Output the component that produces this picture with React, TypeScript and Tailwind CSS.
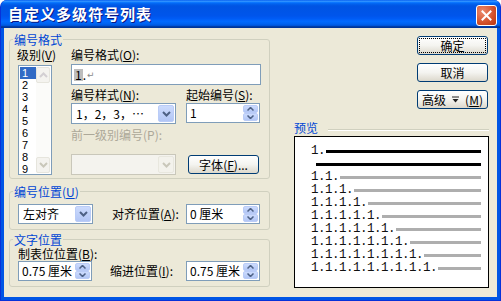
import React from 'react';

const levels = [2, 3, 4, 5, 6, 7, 8, 9];

function Key({ k }: { k: string }) {
  return (
    <span>
      (<span className="underline underline-offset-1">{k}</span>)
    </span>
  );
}

function Chevron({ color, up }: { color: string; up?: boolean }) {
  return (
    <svg width="9" height="6" viewBox="0 0 9 6">
      <path d={up ? 'M1 5l3.5-3.5L8 5' : 'M1 1l3.5 3.5L8 1'} fill="none" stroke={color} strokeWidth="2" />
    </svg>
  );
}

function DropBtn({ disabled }: { disabled?: boolean }) {
  return (
    <div
      className={`flex h-full w-[16px] items-center justify-center rounded-[2px] border ${
        disabled ? 'border-[#E8E7DE] bg-[#F3F2EC]' : 'border-[#BACCF7] bg-gradient-to-b from-[#CCDBFD] to-[#B2C6F5]'
      }`}
    >
      <Chevron color={disabled ? '#C9C7BA' : '#4D6185'} />
    </div>
  );
}

function Combo({ text, className, disabled }: { text?: string; className: string; disabled?: boolean }) {
  return (
    <div
      className={`flex items-stretch border p-[1px] ${
        disabled ? 'border-[#C9C7BA] bg-[#F4F3EE]' : 'border-[#7F9DB9] bg-white'
      } ${className}`}
    >
      <span className="flex flex-1 items-center pl-[3px]">{text}</span>
      <DropBtn disabled={disabled} />
    </div>
  );
}

function SpinBtn({ up }: { up?: boolean }) {
  return (
    <div className="flex h-[8px] w-[15px] items-center justify-center rounded-[2px] border border-[#BACCF7] bg-gradient-to-b from-[#CCDBFD] to-[#B2C6F5]">
      <svg width="7" height="4" viewBox="0 0 7 4">
        <path d={up ? 'M0.5 3.5l3-3 3 3' : 'M0.5 0.5l3 3 3-3'} fill="none" stroke="#4D6185" strokeWidth="1.5" />
      </svg>
    </div>
  );
}

function Spin({ text, className }: { text: string; className: string }) {
  return (
    <div className={`flex h-[20px] border border-[#7F9DB9] bg-white p-[1px] ${className}`}>
      <span className="flex flex-1 items-center pl-[2px] whitespace-nowrap">{text}</span>
      <div className="flex flex-col">
        <SpinBtn up />
        <SpinBtn />
      </div>
    </div>
  );
}

function XpButton({ children, focus, className }: { children: React.ReactNode; focus?: boolean; className?: string }) {
  return (
    <div
      className={`flex h-[19px] w-[71px] rounded-[3px] border border-[#003C74] bg-gradient-to-b from-[#FFFFFF] via-[#F4F4F0] to-[#DCD8CC] p-[1px] ${className ?? ''}`}
    >
      <div
        className={`flex flex-1 items-center justify-center rounded-[1px] border ${
          focus ? 'border-dotted border-[#000000]' : 'border-transparent'
        }`}
      >
        {children}
      </div>
    </div>
  );
}

function Group({ title, children, className }: { title: React.ReactNode; children: React.ReactNode; className?: string }) {
  return (
    <fieldset className={`w-[261px] rounded-[3px] border border-[#D0D0BF] ${className ?? ''}`}>
      <legend className="ml-[3px] px-[1px] text-[12px] leading-[13px] text-[#0046D5]">{title}</legend>
      {children}
    </fieldset>
  );
}

export default function App() {
  return (
    <div className="h-[301px] w-[501px] bg-white font-['Noto_Sans_CJK_SC','Noto_Sans',sans-serif] text-[12px] leading-[12px] text-black">
      <div className="flex h-full w-full flex-col overflow-hidden rounded-t-[7px] border-x border-b border-[#0831D9] bg-[#0055E5]">
        {/* Title bar */}
        <div className="flex h-[28px] items-center bg-[linear-gradient(to_bottom,#0058EE_0%,#3593FF_4%,#288EFF_6%,#127DFF_8%,#036FFC_10%,#0262EE_14%,#0057E5_20%,#0054E3_24%,#0055EB_56%,#005BF5_66%,#026AFE_76%,#0062EF_86%,#0052D6_92%,#0040AB_94%,#003092_100%)] pl-[7px] pr-[3px]">
          <span className="flex-1 text-[15px] leading-[16px] font-bold tracking-[1px] text-white [text-shadow:1px_1px_#0A1883]">
            自定义多级符号列表
          </span>
          <div className="mt-[2px] flex h-[21px] w-[21px] items-center justify-center rounded-[3px] border border-white bg-[radial-gradient(circle_at_30%_30%,#EC8B6E,#D2502B_60%,#B8360E)]">
            <svg width="11" height="11" viewBox="0 0 11 11">
              <path d="M1.5 1.5l8 8M9.5 1.5l-8 8" stroke="white" strokeWidth="2" strokeLinecap="square" />
            </svg>
          </div>
        </div>

        {/* Body */}
        <div className="mx-[3px] mb-[3px] flex flex-1 bg-[#ECE9D8]">
          {/* Left column */}
          <div className="pl-[5px] pt-[5px]">
            <Group title="编号格式">
              <div className="flex pl-[7px] pt-[3px] pb-[3px]">
                <div className="w-[54px]">
                  <div>
                    级别<Key k="V" />
                  </div>
                  <div className="mt-[4px] ml-[1px] flex h-[110px] w-[34px] border border-[#7F9DB9] bg-white p-[1px]">
                    <div className="w-[16px] font-['Liberation_Sans',sans-serif] text-[11px] leading-[12px]">
                      {[1, 2, 3, 4, 5, 6, 7, 8, 9].map((n) => (
                        <div
                          key={n}
                          className={`flex h-[12px] items-center overflow-hidden pl-[2px] ${n === 1 ? 'bg-[#316AC5] text-white' : ''}`}
                        >
                          {n}
                        </div>
                      ))}
                    </div>
                    <div className="flex flex-1 flex-col justify-between bg-[#FBFBF9]">
                      <div className="flex h-[16px] items-center justify-center rounded-[2px] border border-[#E6E5DD] bg-[#F4F3EF]">
                        <Chevron color="#D3CFD3" up />
                      </div>
                      <div className="flex h-[16px] items-center justify-center rounded-[2px] border border-[#E6E5DD] bg-[#F4F3EF]">
                        <Chevron color="#C9C7BA" />
                      </div>
                    </div>
                  </div>
                </div>

                <div>
                  <div>
                    编号格式<Key k="O" />:
                  </div>
                  <div className="mt-[3px] flex h-[21px] w-[190px] items-center border border-[#7F9DB9] bg-white pl-[2px]">
                    <span className="bg-[#BDBDBD] px-[1px]">1</span>
                    <span>.</span>
                    <span className="ml-[1px] font-['DejaVu_Sans',sans-serif] text-[9px] text-[#8A8A8A]">↵</span>
                  </div>

                  <div className="mt-[4px] flex">
                    <div className="w-[105px]">
                      <div>
                        编号样式<Key k="N" />:
                      </div>
                      <Combo className="mt-[2px] h-[21px] w-[105px]" text="1，2，3，…" />
                    </div>
                    <div className="ml-[10px]">
                      <div>
                        起始编号<Key k="S" />:
                      </div>
                      <Spin className="mt-[2px] w-[74px]" text="1" />
                    </div>
                  </div>

                  <div className="mt-[5px] text-[#ACA899]">前一级别编号(P):</div>
                  <div className="mt-[13px] flex items-start">
                    <Combo className="h-[21px] w-[105px]" disabled />
                    <XpButton className="mt-[1px] ml-[12px] h-[18px]">
                      字体<Key k="F" />...
                    </XpButton>
                  </div>
                </div>
              </div>
            </Group>

            <Group
              className="mt-[6px]"
              title={
                <>
                  编号位置<Key k="U" />
                </>
              }
            >
              <div className="flex items-center pt-[6px] pb-[5px] pl-[8px]">
                <Combo className="h-[20px] w-[75px]" text="左对齐" />
                <span className="ml-[19px] w-[74px]">
                  对齐位置<Key k="A" />:
                </span>
                <Spin className="w-[74px]" text="0 厘米" />
              </div>
            </Group>

            <Group className="mt-[3px]" title="文字位置">
              <div className="pt-[2px] pb-[5px] pl-[8px]">
                <div>
                  制表位位置<Key k="B" />:
                </div>
                <div className="mt-[1px] flex items-center">
                  <Spin className="w-[74px]" text="0.75 厘米" />
                  <span className="ml-[18px] w-[76px]">
                    缩进位置<Key k="I" />:
                  </span>
                  <Spin className="w-[74px]" text="0.75 厘米" />
                </div>
              </div>
            </Group>
          </div>

          {/* Right column */}
          <div className="ml-[24px] flex w-[195px] flex-col pt-[8px]">
            <div className="flex flex-col items-end gap-[8px] pr-[1px]">
              <XpButton focus>确定</XpButton>
              <XpButton>取消</XpButton>
              <XpButton>
                <span>高级</span>
                <svg className="mx-[6px]" width="7" height="7" viewBox="0 0 7 7">
                  <path d="M0 1h7" stroke="#222" strokeWidth="1" />
                  <path d="M0.5 3h6L3.5 6.5z" fill="#222" />
                </svg>
                <Key k="M" />
              </XpButton>
            </div>

            <div className="mt-[13px] flex items-center">
              <span className="text-[#0046D5]">预览</span>
              <div className="mt-[3px] ml-[10px] h-[2px] flex-1 border-t border-b border-t-[#D0D0BF] border-b-white" />
            </div>

            <div className="mt-[2px] h-[152px] w-[195px] border border-black bg-white pt-[8px] pr-[7px] font-['Liberation_Mono',monospace] text-[12.5px] leading-[13px] tracking-[-0.5px] text-[#111]">
              <div className="flex h-[13px] items-center pl-[16px]">
                <span>1.</span>
                <div className="ml-[1px] h-[3px] flex-1 bg-black" />
              </div>
              <div className="flex h-[13px] items-center pl-[21px]">
                <div className="h-[3px] flex-1 bg-black" />
              </div>
              {levels.map((n) => (
                <div key={n} className="flex h-[13px] items-center pl-[16px]">
                  <span className="whitespace-pre">{'1.'.repeat(n)}</span>
                  <div className="ml-[1px] h-[3px] flex-1 bg-[#AEAEAE]" />
                </div>
              ))}
            </div>
          </div>
        </div>
      </div>
    </div>
  );
}
